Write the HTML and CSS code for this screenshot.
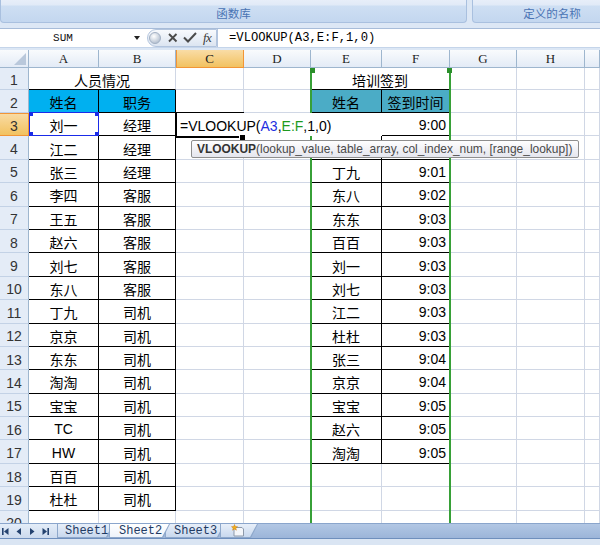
FILE: index.html
```html
<!DOCTYPE html>
<html>
<head>
<meta charset="utf-8">
<link rel="stylesheet" href="styles.css">
</head>
<body>
<div class="app">
  <div class="ribbon">
    <div class="group g1"><span>函数库</span></div>
    <div class="group g2"><span>定义的名称</span></div>
  </div>
  <div class="fbar">
    <div class="namebox"><span class="nm">SUM</span><i class="dd"></i></div>
    <div class="pill">
      <svg class="pico" width="52" height="18" viewBox="0 0 52 18">
        <defs><radialGradient id="gb" cx="40%" cy="35%" r="70%"><stop offset="0" stop-color="#ffffff"/><stop offset="1" stop-color="#aebbcc"/></radialGradient></defs>
        <circle cx="7" cy="9" r="5.5" fill="url(#gb)" stroke="#a3b1c4" stroke-width="1"/>
        <path d="M21 5 L28.5 12.5 M28.5 5 L21 12.5" stroke="#4b4b4b" stroke-width="1.9" fill="none"/>
        <path d="M36 8.5 L40 12.5 L48 4" stroke="#4b4b4b" stroke-width="2" fill="none"/>
      </svg>
      <span class="fx">fx</span>
    </div>
    <div class="finput">=VLOOKUP(A3,E:F,1,0)</div>
  </div>

  <div class="sheet">
    <div class="ch corner"><i class="tri"></i></div>
    <div class="ch">A</div><div class="ch">B</div><div class="ch sel">C</div><div class="ch">D</div><div class="ch">E</div><div class="ch">F</div><div class="ch">G</div><div class="ch">H</div><div class="ch"></div>

    <div class="rh">1</div><div class="c sp2 bb">人员情况</div><div class="c"></div><div class="c"></div><div class="c sp2 bb">培训签到</div><div class="c"></div><div class="c"></div><div class="c"></div>

    <div class="rh">2</div><div class="c t h1">姓名</div><div class="c t h1">职务</div><div class="c"></div><div class="c"></div><div class="c t h2">姓名</div><div class="c t h2">签到时间</div><div class="c"></div><div class="c"></div><div class="c"></div>

    <div class="rh sel">3</div><div class="c t">刘一</div><div class="c t">经理</div><div class="c"></div><div class="c"></div><div class="c t"></div><div class="c t r">9:00</div><div class="c"></div><div class="c"></div><div class="c"></div>

    <div class="rh">4</div><div class="c t">江二</div><div class="c t">经理</div><div class="c"></div><div class="c"></div><div class="c t"></div><div class="c t r"></div><div class="c"></div><div class="c"></div><div class="c"></div>

    <div class="rh">5</div><div class="c t">张三</div><div class="c t">经理</div><div class="c"></div><div class="c"></div><div class="c t">丁九</div><div class="c t r">9:01</div><div class="c"></div><div class="c"></div><div class="c"></div>

    <div class="rh">6</div><div class="c t">李四</div><div class="c t">客服</div><div class="c"></div><div class="c"></div><div class="c t">东八</div><div class="c t r">9:02</div><div class="c"></div><div class="c"></div><div class="c"></div>

    <div class="rh">7</div><div class="c t">王五</div><div class="c t">客服</div><div class="c"></div><div class="c"></div><div class="c t">东东</div><div class="c t r">9:03</div><div class="c"></div><div class="c"></div><div class="c"></div>

    <div class="rh">8</div><div class="c t">赵六</div><div class="c t">客服</div><div class="c"></div><div class="c"></div><div class="c t">百百</div><div class="c t r">9:03</div><div class="c"></div><div class="c"></div><div class="c"></div>

    <div class="rh">9</div><div class="c t">刘七</div><div class="c t">客服</div><div class="c"></div><div class="c"></div><div class="c t">刘一</div><div class="c t r">9:03</div><div class="c"></div><div class="c"></div><div class="c"></div>

    <div class="rh">10</div><div class="c t">东八</div><div class="c t">客服</div><div class="c"></div><div class="c"></div><div class="c t">刘七</div><div class="c t r">9:03</div><div class="c"></div><div class="c"></div><div class="c"></div>

    <div class="rh">11</div><div class="c t">丁九</div><div class="c t">司机</div><div class="c"></div><div class="c"></div><div class="c t">江二</div><div class="c t r">9:03</div><div class="c"></div><div class="c"></div><div class="c"></div>

    <div class="rh">12</div><div class="c t">京京</div><div class="c t">司机</div><div class="c"></div><div class="c"></div><div class="c t">杜杜</div><div class="c t r">9:03</div><div class="c"></div><div class="c"></div><div class="c"></div>

    <div class="rh">13</div><div class="c t">东东</div><div class="c t">司机</div><div class="c"></div><div class="c"></div><div class="c t">张三</div><div class="c t r">9:04</div><div class="c"></div><div class="c"></div><div class="c"></div>

    <div class="rh">14</div><div class="c t">淘淘</div><div class="c t">司机</div><div class="c"></div><div class="c"></div><div class="c t">京京</div><div class="c t r">9:04</div><div class="c"></div><div class="c"></div><div class="c"></div>

    <div class="rh">15</div><div class="c t">宝宝</div><div class="c t">司机</div><div class="c"></div><div class="c"></div><div class="c t">宝宝</div><div class="c t r">9:05</div><div class="c"></div><div class="c"></div><div class="c"></div>

    <div class="rh">16</div><div class="c t">TC</div><div class="c t">司机</div><div class="c"></div><div class="c"></div><div class="c t">赵六</div><div class="c t r">9:05</div><div class="c"></div><div class="c"></div><div class="c"></div>

    <div class="rh">17</div><div class="c t">HW</div><div class="c t">司机</div><div class="c"></div><div class="c"></div><div class="c t">淘淘</div><div class="c t r">9:05</div><div class="c"></div><div class="c"></div><div class="c"></div>

    <div class="rh">18</div><div class="c t">百百</div><div class="c t">司机</div><div class="c"></div><div class="c"></div><div class="c"></div><div class="c"></div><div class="c"></div><div class="c"></div><div class="c"></div>

    <div class="rh">19</div><div class="c t">杜杜</div><div class="c t">司机</div><div class="c"></div><div class="c"></div><div class="c"></div><div class="c"></div><div class="c"></div><div class="c"></div><div class="c"></div>

    <div class="rh">20</div><div class="c"></div><div class="c"></div><div class="c"></div><div class="c"></div><div class="c"></div><div class="c"></div><div class="c"></div><div class="c"></div><div class="c"></div>

    <div class="rng"><i class="sq l"></i><i class="sq r"></i></div>
    <div class="edit">=VLOOKUP(<span class="rb">A3</span>,<span class="rg">E:F</span>,1,0)</div>
    <div class="act"><i class="fh"></i></div>
    <div class="sela"><i class="k tl"></i><i class="k tr"></i><i class="k bl"></i><i class="k br"></i></div>
    <div class="tip"><b>VLOOKUP</b>(lookup_value, table_array, col_index_num, [range_lookup])</div>
  </div>

  <div class="tabs">
    <div class="nav">
      <svg width="56" height="15" viewBox="0 0 56 15">
        <g fill="#24426f">
          <rect x="2" y="4" width="1.6" height="7"/>
          <path d="M4 7.5 L8.5 4 L8.5 11 Z"/>
          <path d="M16.5 7.5 L21 4 L21 11 Z"/>
          <path d="M34.5 7.5 L30 4 L30 11 Z"/>
          <path d="M47 7.5 L42.5 4 L42.5 11 Z"/>
          <rect x="47.4" y="4" width="1.6" height="7"/>
        </g>
      </svg>
    </div>
    <div class="tab t1"><div class="tin">Sheet1</div></div>
    <div class="tab t2 act2"><div class="tin">Sheet2</div></div>
    <div class="tab t3"><div class="tin">Sheet3</div></div>
    <div class="tab t4"><div class="tin">
      <svg width="16" height="13" viewBox="0 0 16 13">
        <path d="M4 3.5 H12 L13.5 5 V12 H4 Z" fill="#f4f6fa" stroke="#8d99aa" stroke-width="1"/>
        <path d="M4.5 0.5 L5.3 2.6 L7.5 2.7 L5.8 4 L6.4 6.2 L4.5 5 L2.6 6.2 L3.2 4 L1.5 2.7 L3.7 2.6 Z" fill="#f2b21c" stroke="#d07d10" stroke-width="0.5"/>
      </svg>
    </div></div>
    <div class="tabrest"></div>
  </div>
  <div class="status"></div>
</div>
</body>
</html>
```

FILE: styles.css
```css
* { box-sizing: border-box; margin: 0; padding: 0; }
html, body { width: 600px; height: 545px; overflow: hidden; }
body {
  background: #dce7f5;
  font-family: "Liberation Sans", "Noto Sans CJK SC", sans-serif;
}
.app {
  width: 600px;
  height: 545px;
  display: flex;
  flex-direction: column;
  overflow: hidden;
}

/* ribbon */
.ribbon {
  height: 23px;
  flex: none;
  display: flex;
  overflow: hidden;
}
.group {
  height: 23px;
  flex: none;
  display: flex;
  align-items: flex-end;
  justify-content: center;
  padding-bottom: 1px;
  background: linear-gradient(#e7eef9 0, #e1eaf7 5px, #cedff3 6px, #c3d7ef 100%);
  border: 1px solid #a9c0df;
  border-top: none;
  border-radius: 0 0 4px 4px;
  font: 11.5px "Noto Sans CJK SC", sans-serif;
  color: #4a74b4;
}
.g1 { width: 467px; }
.g2 { width: 160px; margin-left: 5px; }

/* formula bar */
.fbar {
  height: 20px;
  margin-top: 5px;
  flex: none;
  display: flex;
  background: #fff;
  border-top: 1px solid #a7bcd9;
  border-bottom: 1px solid #c5d5ea;
}
.namebox {
  width: 147px;
  display: flex;
  align-items: center;
}
.nm {
  width: 126px;
  text-align: center;
  font: 11px "Liberation Mono", monospace;
  color: #111;
}
.dd {
  margin-left: 8px;
  width: 0;
  height: 0;
  border-left: 3.5px solid transparent;
  border-right: 3.5px solid transparent;
  border-top: 4px solid #222;
}
.pill {
  width: 70px;
  height: 18px;
  display: flex;
  align-items: center;
  background: linear-gradient(#f8fafd, #dce5f1);
  border: 1px solid #b3c5de;
  border-radius: 9px 0 0 9px;
}
.pico { flex: none; }
.fx {
  margin-left: 3px;
  font: italic 13px "Liberation Serif", serif;
  color: #3a3a3a;
  letter-spacing: -0.5px;
}
.finput {
  flex: 1;
  border-left: 1px solid #b3c5de;
  padding-left: 11px;
  font: 12.2px/18px "Liberation Mono", monospace;
  color: #000;
}

/* sheet */
.sheet {
  position: relative;
  flex: none;
  height: 473px;
  margin-top: 2px;
  display: grid;
  grid-template-columns: 29px 70px 77px 68px 67px 71px 68px 67px 68px 15px;
  grid-template-rows: 18px 22px 23px repeat(18, 23.4px);
  overflow: hidden;
  background: #fff;
}
.ch {
  background: linear-gradient(#f9fbfd, #e3ebf6);
  border-right: 1px solid #9eb6ce;
  border-bottom: 1px solid #9eb6ce;
  display: flex;
  align-items: center;
  justify-content: center;
  font: 13px "Liberation Serif", serif;
  color: #222;
}
.ch.sel {
  background: linear-gradient(#f9dca6, #f2c260);
  border-color: #f29536;
  box-shadow: inset 1px 0 0 #f29536;
}
.corner {
  align-items: flex-end;
  justify-content: flex-end;
}
.tri {
  margin: 0 2px 2px 0;
  width: 0;
  height: 0;
  border-left: 12px solid transparent;
  border-bottom: 12px solid #b9c8db;
}
.rh {
  background: #e4ecf7;
  border-right: 1px solid #9eb6ce;
  border-bottom: 1px solid #c3d2e6;
  display: flex;
  align-items: center;
  justify-content: center;
  padding-top: 3px;
  font-size: 14px;
  color: #333;
}
.rh.sel {
  background: linear-gradient(#f9dca6, #f2c260);
  border-color: #f29536;
  box-shadow: inset 0 1px 0 #f29536;
}
.c {
  border-right: 1px solid #d0d7e5;
  border-bottom: 1px solid #d0d7e5;
  display: flex;
  align-items: center;
  justify-content: center;
  padding-top: 2px;
  font-size: 14px;
  color: #000;
  white-space: nowrap;
  overflow: hidden;
}
.t { border-right-color: #000; border-bottom-color: #000; }
.bb { border-bottom-color: #000; }
.h1 { background: #00b0f0; }
.h2 { background: #4bacc6; }
.r { justify-content: flex-end; padding-right: 3px; }
.sp2 { grid-column: span 2; }

/* overlays */
.rng {
  position: absolute;
  left: 310px;
  top: 18px;
  bottom: 0;
  width: 141px;
  border-left: 2px solid #37a037;
  border-right: 2px solid #37a037;
}
.rng .sq {
  position: absolute;
  top: 0;
  width: 5px;
  height: 5px;
  background: #2b8f2b;
}
.rng .l { left: -2px; }
.rng .r { right: -3px; }
.edit {
  position: absolute;
  left: 177px;
  top: 63px;
  width: 205px;
  height: 23px;
  background: #fff;
  display: flex;
  align-items: center;
  padding: 2px 0 0 3px;
  font-size: 14px;
  color: #000;
  white-space: nowrap;
}
.rb { color: #1f2fe0; }
.rg { color: #1e9a1e; }
.act {
  position: absolute;
  left: 175px;
  top: 62px;
  width: 69px;
  height: 26px;
  border-top: 1px solid #000;
  border-left: 2px solid #000;
  border-bottom: 2px solid #000;
}
.fh {
  position: absolute;
  right: -1px;
  bottom: -4px;
  width: 5px;
  height: 5px;
  background: #000;
  outline: 1px solid #fff;
}
.sela {
  position: absolute;
  left: 29px;
  top: 62px;
  width: 70px;
  height: 24px;
  border: 1px solid #1a2be8;
}
.sela .k {
  position: absolute;
  width: 4px;
  height: 4px;
  background: #1a2be8;
}
.sela .tl { left: -1px; top: -1px; }
.sela .tr { right: -1px; top: -1px; }
.sela .bl { left: -1px; bottom: -1px; }
.sela .br { right: -1px; bottom: -1px; }
.tip {
  position: absolute;
  left: 191px;
  top: 90px;
  width: 388px;
  height: 18px;
  border: 1px solid #8e8e8e;
  border-radius: 2px;
  background: linear-gradient(#fefefe, #e5e6ee);
  display: flex;
  align-items: center;
  padding-left: 5px;
  font-size: 11.95px;
  color: #4a4a4a;
  white-space: nowrap;
}
.tip b { color: #333; }

/* sheet tabs */
.tabs {
  height: 16px;
  flex: none;
  display: flex;
  background: linear-gradient(#b2c7e4, #9cb5d9);
  border-top: 1px solid #8aa5cc;
  border-bottom: 1px solid #6f8fbd;
}
.nav {
  width: 57px;
  flex: none;
  display: flex;
  align-items: center;
  background: linear-gradient(#e4edf8, #ccdaee);
}
.tab {
  flex: none;
  height: 14px;
  padding: 0 1px 1px 1px;
  background: #8ea8cb;
  clip-path: polygon(0 0, 100% 0, calc(100% - 7px) 100%, 0 100%);
}
.tin {
  height: 13px;
  display: flex;
  align-items: center;
  background: linear-gradient(#e8eff9, #c8d8ee);
  clip-path: polygon(0 0, 100% 0, calc(100% - 7px) 100%, 0 100%);
  font: 12px "Liberation Mono", monospace;
  color: #1f3a63;
  white-space: nowrap;
}
.t1 { width: 57px; }
.t1 .tin { padding-left: 7px; }
.t2 { width: 61px; margin-left: -5px; position: relative; z-index: 1; }
.t2 .tin { padding-left: 9px; background: linear-gradient(#ffffff, #eef3fa); }
.t3 { width: 60px; margin-left: -5px; }
.t3 .tin { padding-left: 8px; }
.t4 { width: 38px; margin-left: -5px; }
.t4 .tin { padding-left: 9px; }
.tabrest { flex: 1; }
.status {
  flex: 1;
  background: #dae5f3;
}
```
